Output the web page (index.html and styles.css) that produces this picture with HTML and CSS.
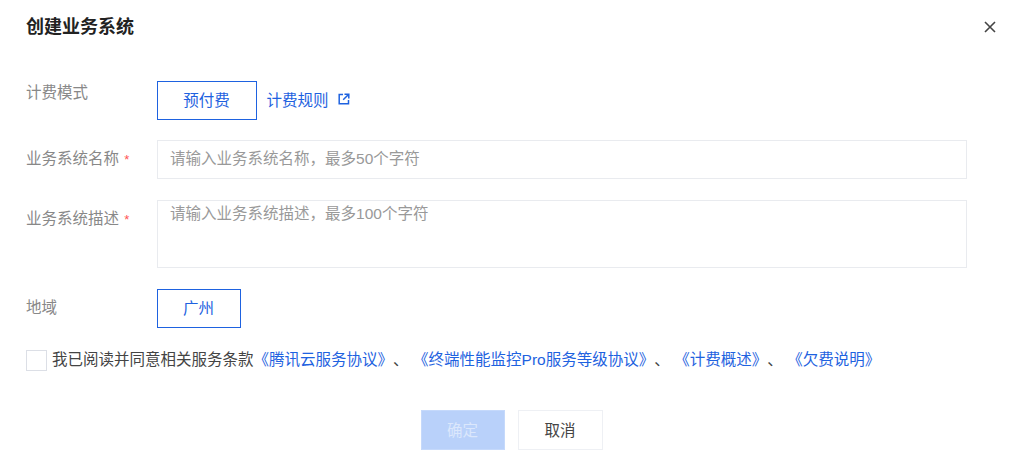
FILE: index.html
```html
<!DOCTYPE html>
<html lang="zh-CN">
<head>
    <meta charset="UTF-8">
    <title>创建业务系统</title>
    <link rel="stylesheet" href="styles.css">
</head>
<body>
    <div class="dialog">
        <div class="dialog-head">
            <h1>创建业务系统</h1>
            <svg class="close" width="12" height="12" viewBox="0 0 12 12">
                <path d="M1 1L11 11M11 1L1 11" stroke="#444" stroke-width="1.6" fill="none"/>
            </svg>
        </div>

        <div class="form">
            <div class="form-row row-mode">
                <label>计费模式</label>
                <div class="control">
                    <span class="option option-wide">预付费</span>
                    <a class="rule-link">计费规则
                        <svg width="12" height="12" viewBox="0 0 12 12">
                            <path d="M5 1.5H1.2V10.8H10.5V7M6.5 1.2H10.8V5.5M10.5 1.5L5.2 6.8" stroke="#1e62e0" stroke-width="1.5" fill="none"/>
                        </svg>
                    </a>
                </div>
            </div>

            <div class="form-row row-name">
                <label>业务系统名称 <i>*</i></label>
                <div class="control">
                    <div class="input">请输入业务系统名称，最多50个字符</div>
                </div>
            </div>

            <div class="form-row row-desc">
                <label>业务系统描述 <i>*</i></label>
                <div class="control">
                    <div class="textarea">请输入业务系统描述，最多100个字符</div>
                </div>
            </div>

            <div class="form-row row-region">
                <label>地域</label>
                <div class="control">
                    <span class="option">广州</span>
                </div>
            </div>

            <div class="agree">
                <span class="checkbox"></span>
                <p>我已阅读并同意相关服务条款<a>《腾讯云服务协议》</a>、<a>《终端性能监控Pro服务等级协议》</a>、<a>《计费概述》</a>、<a>《欠费说明》</a></p>
            </div>
        </div>

        <div class="dialog-foot">
            <span class="btn btn-primary">确定</span>
            <span class="btn">取消</span>
        </div>
    </div>
</body>
</html>
```

FILE: styles.css
```css
* {
    margin: 0;
    padding: 0;
    box-sizing: border-box;
}

body {
    font-family: "Liberation Sans", "Noto Sans CJK SC", sans-serif;
    font-size: 15.5px;
    background: #fff;
    color: #333;
    overflow: hidden;
    text-spacing-trim: space-all;
}

.dialog {
    width: 1019px;
    height: 467px;
    padding: 16px 26px 0;
}

.dialog-head {
    display: flex;
    justify-content: space-between;
    align-items: center;
    height: 24px;
}

.dialog-head h1 {
    font-size: 18px;
    font-weight: 700;
    line-height: 24px;
    margin-top: -2px;
    color: #222;
}

.close {
    margin-right: -3px;
    margin-top: -2px;
}

.form {
    width: 941px;
    margin-top: 41px;
}

.form-row {
    display: flex;
}

.form-row label {
    width: 130.6px;
    flex: none;
    color: #888;
    line-height: 22px;
}

.form-row label i {
    color: #f55;
    font-style: normal;
    font-size: 13px;
    margin-left: 1px;
}

.control {
    flex: 1;
    display: flex;
    align-items: center;
}

.row-mode label {
    padding-top: 1px;
}

.row-name {
    margin-top: 20px;
}

.row-name label {
    padding-top: 8px;
}

.row-desc {
    margin-top: 21px;
}

.row-desc label {
    padding-top: 8px;
}

.row-region {
    margin-top: 21px;
}

.row-region label {
    padding-top: 8px;
}

.option {
    width: 84px;
    height: 39px;
    padding-bottom: 4px;
    display: flex;
    align-items: center;
    justify-content: center;
    border: 1px solid #1e62e0;
    color: #1e62e0;
}

.option-wide {
    width: 100px;
}

.rule-link {
    display: flex;
    align-items: center;
    gap: 9px;
    margin-left: 10px;
    padding-bottom: 3px;
    color: #1e62e0;
}

.input,
.textarea {
    width: 100%;
    border: 1px solid #e9ebef;
    color: #999;
    padding-left: 12.5px;
}

.input {
    height: 39px;
    line-height: 35px;
}

.textarea {
    height: 68px;
    line-height: 26px;
}

.agree {
    display: flex;
    align-items: center;
    gap: 5px;
    margin-top: 22px;
}

.agree p {
    white-space: nowrap;
    color: #444;
    margin-top: -5px;
}

.checkbox {
    width: 21px;
    height: 21px;
    border: 1px solid #dcdfe6;
    flex: none;
}

.agree a {
    color: #1e62e0;
}

.agree a + a {
    margin-left: 4.5px;
}

.dialog-foot {
    display: flex;
    justify-content: center;
    gap: 13px;
    margin-top: 39px;
    padding-left: 4px;
}

.btn {
    width: 85px;
    height: 40px;
    padding-bottom: 3px;
    display: flex;
    align-items: center;
    justify-content: center;
    border: 1px solid #eef0f4;
    color: #444;
}

.btn-primary {
    width: 84px;
    background: #b9d1fa;
    border-color: #c5d9fb;
    color: #dbe7fc;
}
```
